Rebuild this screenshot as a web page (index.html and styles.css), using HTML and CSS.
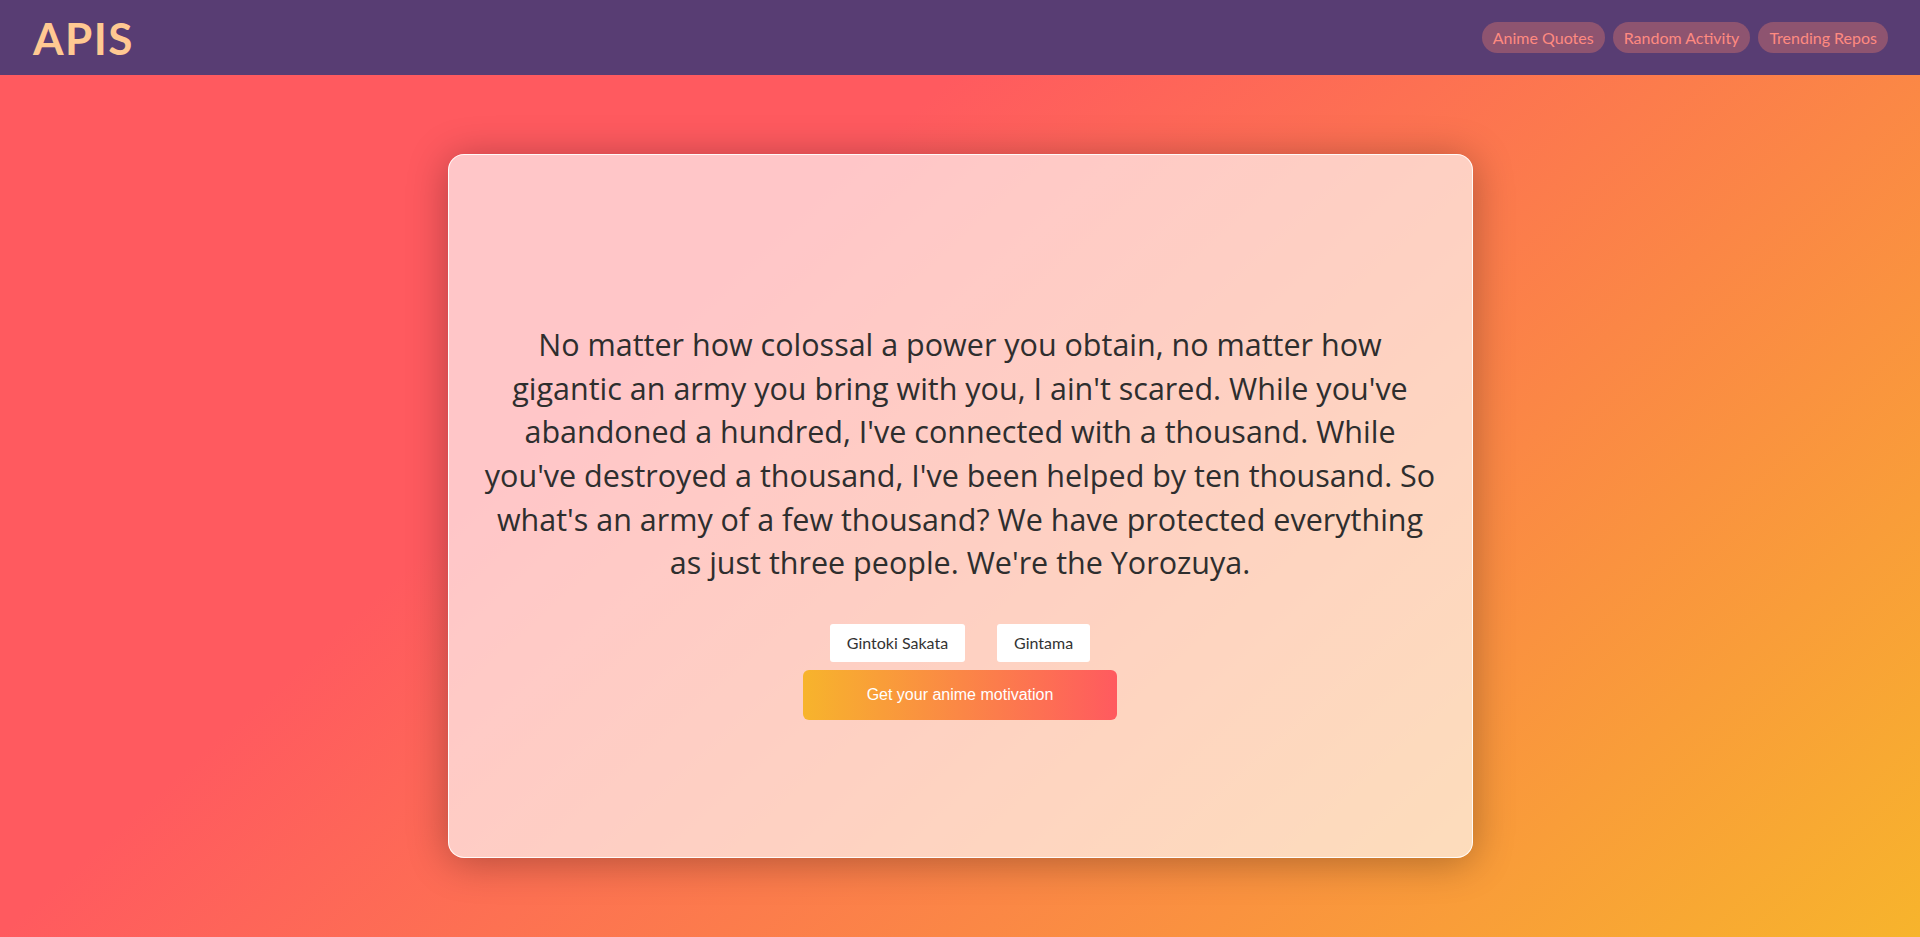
FILE: index.html
```html
<!DOCTYPE html>
<html lang="en">
<head>
<meta charset="utf-8">
<title>APIS</title>
<link rel="stylesheet" href="styles.css">
</head>
<body>
<header class="topbar">
  <div class="logo">APIS</div>
  <nav class="nav">
    <a class="pill" href="#">Anime Quotes</a>
    <a class="pill" href="#">Random Activity</a>
    <a class="pill" href="#">Trending Repos</a>
  </nav>
</header>
<main class="stage">
  <section class="card">
    <p class="quote">No matter how colossal a power you obtain, no matter how<br>gigantic an army you bring with you, I ain't scared. While you've<br>abandoned a hundred, I've connected with a thousand. While<br>you've destroyed a thousand, I've been helped by ten thousand. So<br>what's an army of a few thousand? We have protected everything<br>as just three people. We're the Yorozuya.</p>
    <div class="chips">
      <span class="chip">Gintoki Sakata</span>
      <span class="chip">Gintama</span>
    </div>
    <button class="cta">Get your anime motivation</button>
  </section>
</main>
</body>
</html>
```

FILE: styles.css
```css
* { box-sizing: border-box; }
html, body { margin: 0; padding: 0; }
body {
  height: 937px;
  font-family: "Lato", "Noto Sans", sans-serif;
  background: linear-gradient(138deg, #ff5a5f 35%, #f7b42c 100%);
  overflow: hidden;
}
.topbar {
  height: 75px;
  background: #583d73;
  display: flex;
  align-items: center;
  justify-content: space-between;
  padding: 0 32px 0 33px;
}
.logo {
  color: #ffc992;
  font-size: 44px;
  font-weight: 700;
  letter-spacing: 1.5px;
  line-height: 1;
}
.nav {
  display: flex;
  gap: 8px;
}
.pill {
  height: 31px;
  display: flex;
  align-items: center;
  padding: 0 11px;
  border-radius: 16px;
  background: #8e5470;
  color: #ff8a80;
  font-size: 16px;
  text-decoration: none;
}
.stage {
  height: 862px;
  display: flex;
  align-items: center;
  justify-content: center;
}
.card {
  width: 1025px;
  height: 704px;
  border: 1px solid rgba(255, 255, 255, 0.9);
  border-radius: 16px;
  background: rgba(255, 255, 255, 0.66);
  box-shadow: 0 4px 40px rgba(0, 0, 0, 0.3);
  display: flex;
  flex-direction: column;
  align-items: center;
  justify-content: center;
  padding: 31px 20px 0;
}
.quote {
  margin: 0 0 39px;
  text-align: center;
  font-family: "Open Sans", "Lato", sans-serif;
  font-size: 30.5px;
  line-height: 43.6px;
  color: #2e2e2e;
  white-space: nowrap;
}
.chips {
  display: flex;
  gap: 32px;
  margin-bottom: 8px;
}
.chip {
  height: 38px;
  display: flex;
  align-items: center;
  padding: 0 17px;
  background: #ffffff;
  border-radius: 3px;
  color: #333;
  font-size: 16px;
}
.cta {
  width: 314px;
  height: 50px;
  border: none;
  border-radius: 6px;
  background: linear-gradient(to right, #f7b42c, #ff5a5f);
  color: #ffffff;
  font-family: "Liberation Sans", Arial, sans-serif;
  font-size: 16px;
}
```
